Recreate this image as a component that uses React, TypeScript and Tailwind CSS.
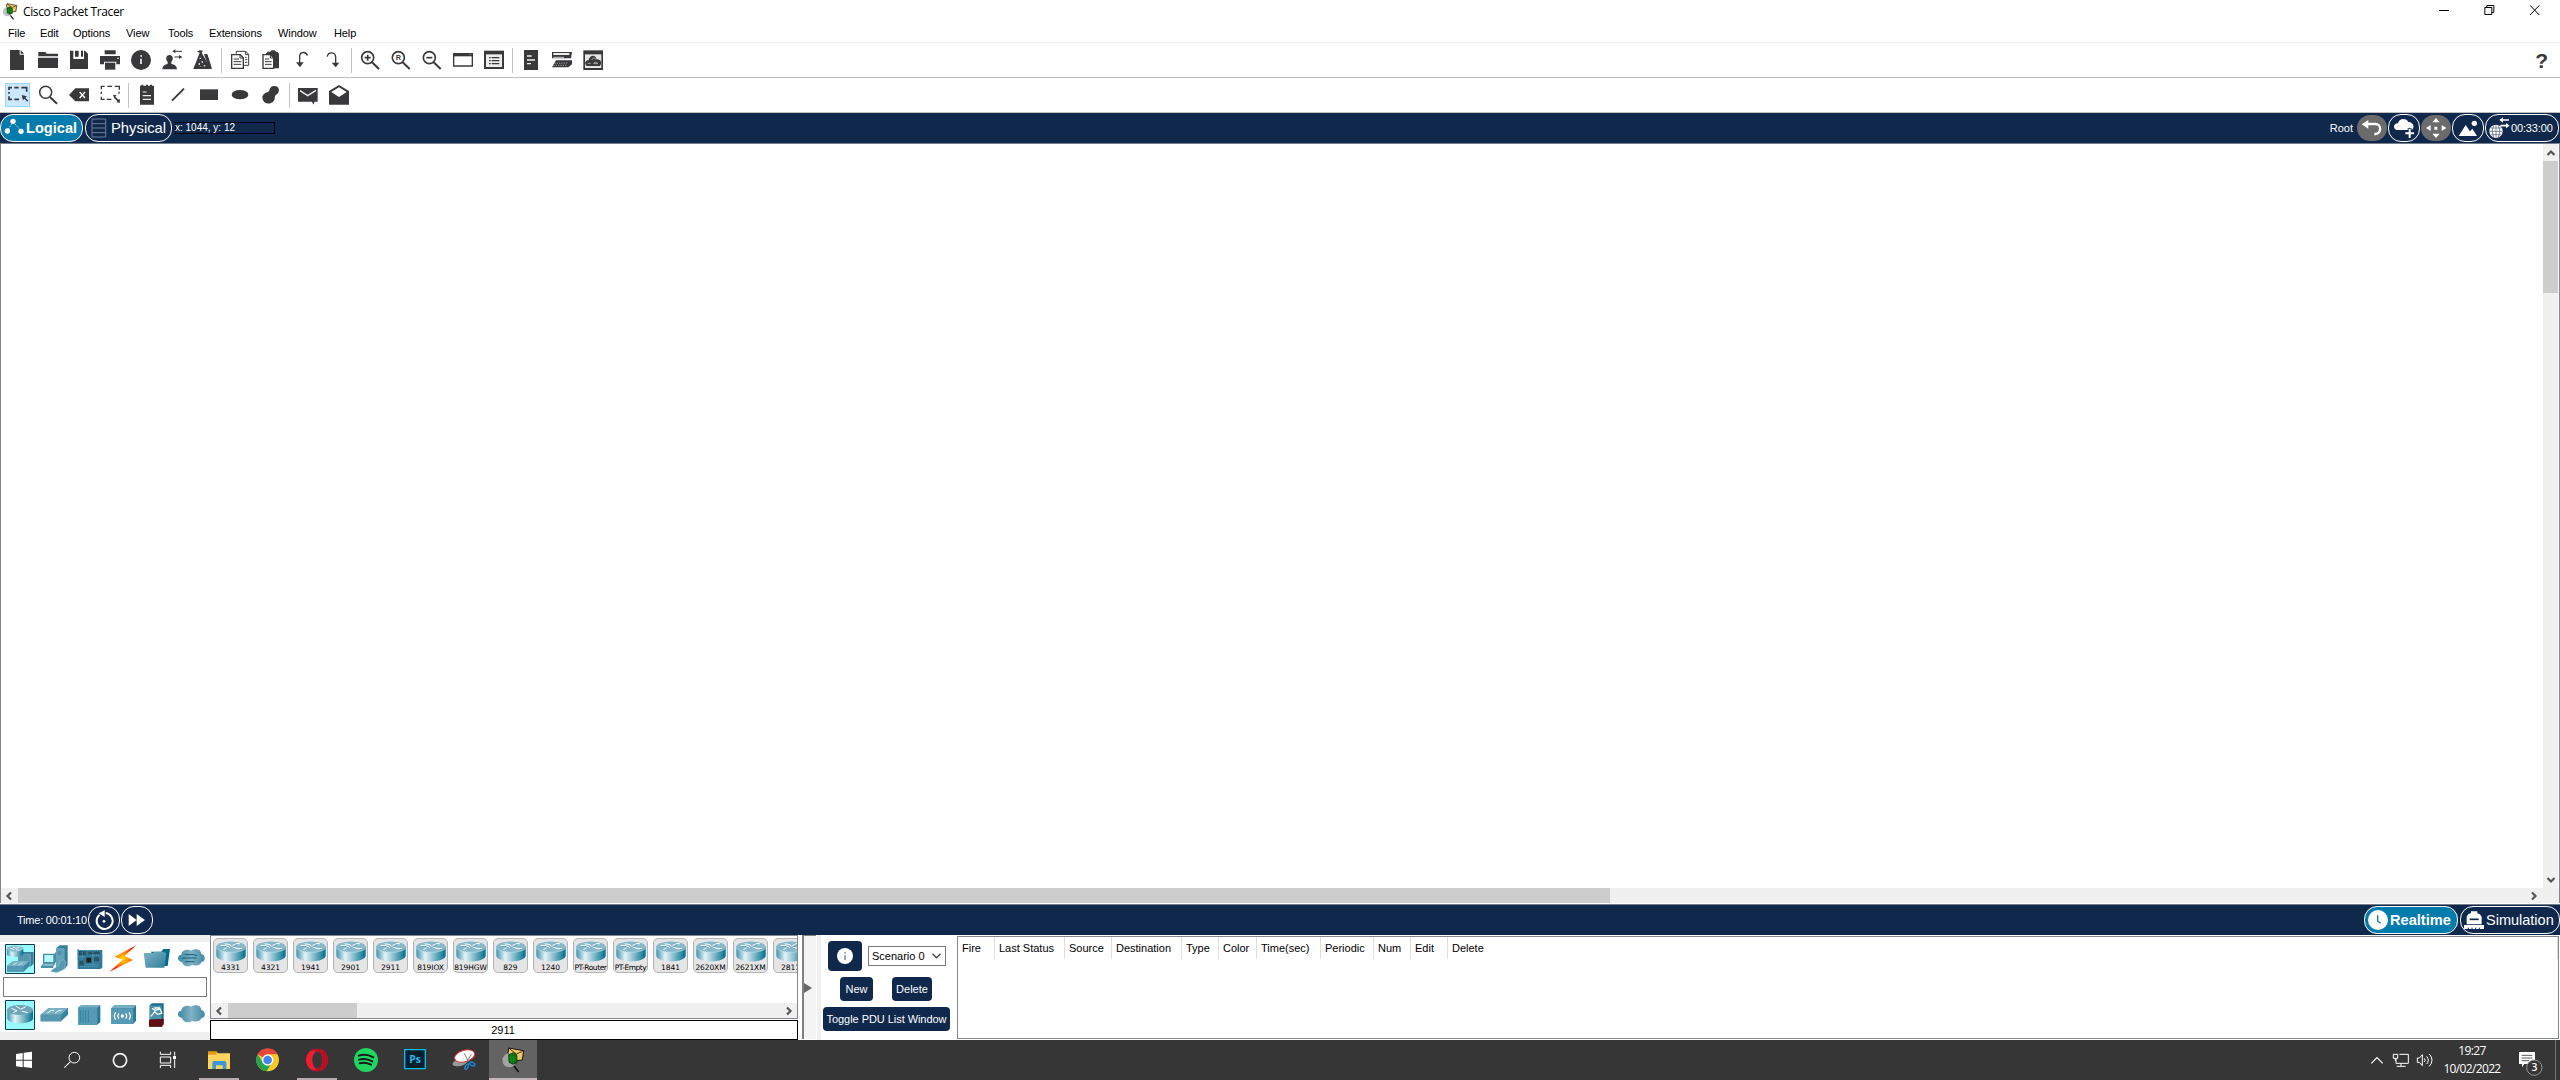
import React from "react";

type P = { box: string; w: string; children: React.ReactNode };
const Glyph = ({ box, w, children }: P) => (
  <svg viewBox={box} className={"block shrink-0 " + w} fill="none">
    {children}
  </svg>
);

const D = "#39393b";
const NAVY = "#0f284c";

/* ---------- shared gradients ---------- */
const Defs = () => (
  <svg className="absolute size-0">
    <defs>
      <linearGradient id="cyl" x1="0" x2="1">
        <stop offset="0" stopColor="#3f93ad" />
        <stop offset=".3" stopColor="#e3f3f7" />
        <stop offset=".5" stopColor="#a5cfdb" />
        <stop offset="1" stopColor="#006f8e" />
      </linearGradient>
      <linearGradient id="steel" x1="0" x2="1" y1="0" y2="1">
        <stop offset="0" stopColor="#7fb3c6" />
        <stop offset="1" stopColor="#2f7f9c" />
      </linearGradient>
      <linearGradient id="cloud" x1="0" x2="1">
        <stop offset="0" stopColor="#3e89a6" />
        <stop offset=".5" stopColor="#82b1c3" />
        <stop offset="1" stopColor="#3e89a6" />
      </linearGradient>
      <radialGradient id="bolt">
        <stop offset="0" stopColor="#ffe000" />
        <stop offset=".45" stopColor="#ff8a00" />
        <stop offset="1" stopColor="#ff1500" />
      </radialGradient>
    </defs>
  </svg>
);

/* ---------- main toolbar ---------- */
const files: React.ReactNode[] = [
  <path d="M30 150h29v14h13v46H30zM62 150l10 11H62z" fill={D} />,
  <path d="M115 156h21l4 5h34v8h-59zM114 173h60v31h-60z" fill={D} />,
  <><path d="M210 152h10v25h32v-25h3l9 9v46h-54z" fill={D} /><path d="M225 152h11v18h-11zM243 152h6v18h-6z" fill={D} /></>,
  <><path d="M314 151h33v12h-33zM300 168h60v25h-11v-8h-37v8h-12z" fill={D} /><path d="M315 188h31v21h-31z" fill={D} /><path d="M352 173h4v4h-4z" fill="#fff" /></>,
  <><circle cx="423" cy="180" r="30" fill={D} /><path d="M421 165h5v6h-5zM420 176h6v16h-6z" fill="#d4d4d4" /></>,
  <><path d="M487 208c0-11 8-14 16-17v-5c-8-10-4-21 6-21s13 12 5 21v5c9 3 17 6 17 17z" fill={D} /><path d="M524 154h22M523 171h22" stroke={D} strokeWidth="3" /><path d="M517 154l9-6v12zM546 171l-9-6v12z" fill={D} /></>,
  <><path d="M580 207l19-49-8-3 8-4 10 1-4 6 28 49z" fill={D} /><path d="M612 163l10-1 14 44h-8z" fill={D} /><path d="M599 173h4v4h-4zM605 184h4v4h-4zM596 190h4v4h-4zM611 196h5v4h-5zM599 199h5v3h-5z" fill="#fff" /><path d="M582 202h49" stroke={D} strokeWidth="5" /></>,
];
const edits: React.ReactNode[] = [
  <><path d="M709 161v-7h28l9 9v33h-14" stroke={D} strokeWidth="3" /><path d="M737 154v10h9M717 172" stroke={D} strokeWidth="3" /><path d="M695 164h26l9 9v32h-35z" fill="#fff" stroke={D} strokeWidth="4" /><path d="M701 177h16M701 185h23M701 193h23M720 164v10h9M735 172h5M735 179h7M735 187h7" stroke={D} strokeWidth="3" /></>,
  <><path d="M797 161l6-6h8l4-4h9l4 4h4l5 6v44h-16l-7-32-12-9z" fill={D} /><path d="M789 164h23l9 9v32h-32z" fill="#fff" stroke={D} strokeWidth="4" /><path d="M795 177h13M795 185h20M795 193h20M811 164v10h9" stroke={D} strokeWidth="3" /></>,
  <><path d="M922 167c-3-14-23-12-23 2v21" stroke={D} strokeWidth="4" /><path d="M888 187h23l-11 15z" fill={D} /></>,
  <><path d="M982 170c2-16 25-15 25 2v18" stroke={D} strokeWidth="4" /><path d="M995 188h23l-11 14z" fill={D} /></>,
];
const views: React.ReactNode[] = [
  <><circle cx="173" cy="83" r="18" stroke={D} strokeWidth="5" /><path d="M186 97l21 20" stroke={D} strokeWidth="6" /><path d="M164 83h18M173 74v18" stroke={D} strokeWidth="5" /></>,
  <><circle cx="265" cy="83" r="18" stroke={D} strokeWidth="5" /><path d="M278 97l21 20" stroke={D} strokeWidth="6" /><text x="265" y="91" textAnchor="middle" fill={D} fontSize="22" fontWeight="700" fontFamily="Liberation Sans">R</text></>,
  <><circle cx="358" cy="83" r="18" stroke={D} strokeWidth="5" /><path d="M371 97l21 20" stroke={D} strokeWidth="6" /><path d="M349 83h18" stroke={D} strokeWidth="5" /></>,
  <><path d="M431 71h56v37h-56z" stroke={D} strokeWidth="4" /><path d="M430 70h58v9h-58z" fill={D} /><path d="M478 73h6" stroke="#aaa" strokeWidth="2" /></>,
  <><path d="M522 62h60v55h-60z" fill={D} /><path d="M528 73h48v38h-48z" fill="#ededed" /><path d="M537 83h5M545 83h23M537 92h5M545 92h23M537 101h5M545 101h23" stroke={D} strokeWidth="4" /></>,
];
const tools: React.ReactNode[] = [
  <><path d="M642 60h42v60h-42z" fill={D} /><path d="M651 78h14M651 90h24M651 101h12" stroke="#eee" strokeWidth="4" /></>,
  <><path d="M726 66h60l-3 19h-57z" fill={D} /><path d="M730 69h48v6h-48z" fill="#eee" /><path d="M730 82h32" stroke="#ccc" strokeWidth="3" /><path d="M738 91h48v12l-11 9h-49z" fill={D} /><path d="M733 100l42-1M730 106h40" stroke="#999" strokeWidth="3" strokeDasharray="4 3" /></>,
  <><path d="M820 61h59v59h-59z" fill={D} /><path d="M825 73h49v41h-49z" fill="#e6e6e6" /><path d="M828 106c-7-12 4-16 8-15 2-17 22-18 24-3 13-1 17 11 10 20h-40z" fill={D} /><path d="M846 90c1-8 11-8 12-1M833 100h9M851 101c2-6 11-6 12 0z" stroke="#aaa" strokeWidth="3" /></>,
];
const select: React.ReactNode[] = [
  <><path d="M16.500 250.500h72v69h-72z" fill="#cce8ff" stroke="#99d1ff" strokeWidth="3" /><path d="M27 270v-7h9M43 263h13M64 263h16v12M27 276v5M27 289v9h9M43 298h14" stroke={D} strokeWidth="5" /><path d="M65 285l16 4-5 4 9 9-3 3-9-9-4 5z" fill={D} /></>,
  <><circle cx="137" cy="277" r="18" stroke={D} strokeWidth="4.500" /><path d="M150 291l21 20" stroke={D} strokeWidth="6" /></>,
  <><path d="M207 285l19-20h41v39h-41z" fill={D} /><path d="M239 276l16 18M255 276l-16 18" stroke="#fff" strokeWidth="4" /></>,
  <><path d="M304 268v-9h10M322 259h14M344 259h14v10M304 275v7M304 290v8h10M320 298h14M357 275v6" stroke={D} strokeWidth="4" /><path d="M339 284l4 11 9 9-3 3 11 1-1-12-4 3-9-9 4-4z" fill={D} /></>,
];
const draws: React.ReactNode[] = [
  <><path d="M420 257h4v-3h6v3h8v-3h6v3h6v-3h6v3h6v57h-42z" fill={D} /><path d="M428 276h12M428 287h25M428 298h25" stroke="#eee" strokeWidth="3.500" /></>,
  <path d="M516 302l36-36" stroke={D} strokeWidth="6" />,
  <path d="M600 268h54v32h-54z" fill={D} />,
  <ellipse cx="720" cy="284" rx="25" ry="14" fill={D} />,
  <path d="M788 298c-3-12 5-19 14-21 10-3 4-19 21-19s17 20 7 25c-8 5-4 13-8 19-9 12-30 12-34-4z" fill={D} />,
];
const mails: React.ReactNode[] = [
  <><path d="M894 264h59v41h-9l-4 9-4-9h-42z" fill={D} /><path d="M900 272l23 15 25-16" stroke="#eee" strokeWidth="4" /></>,
  <><path d="M987 273l30-18 30 18v41h-60z" fill={D} /><path d="M994 276l23-14 23 14-23 15z" fill="#fff" /></>,
];

type RowP = { items: React.ReactNode[]; x: number; y: number };
const Tools = ({ items, x, y }: RowP) => (
  <>
    {items.map((n, i) => (
      <Glyph key={i} box={`${x + 93 * i} ${y} 93 90`} w="w-[31px] h-[30px]">{n}</Glyph>
    ))}
  </>
);
const Sep = () => (
  <div className="flex w-[6px] shrink-0 pl-[3px]"><div className="h-[25px] w-px bg-[#c6c6c6]" /></div>
);

/* ---------- network devices ---------- */
const Router = () => (
  <svg viewBox="0 0 90 62" className="block h-[21px] w-[30px]" fill="none">
    <path d="M1 17v27c0 9 20 17 44 17s44-8 44-17V17z" fill="url(#cyl)" />
    <ellipse cx="45" cy="17" rx="44" ry="16" fill="#86b9cc" />
    <path d="M1 19c3 19 85 19 88 0" stroke="#c3e1ea" strokeWidth="2" />
    <path d="M14 13h14l14 6M26 8l16 2 4 6M49 14l13-7 10 1M50 17l16 6 12-2M22 25l13-7" stroke="#fff" strokeWidth="3" />
    <path d="M15 16h12l12 5M50 17l12-6" stroke="#3f7f96" strokeWidth="1.500" />
  </svg>
);
const devices = ["4331", "4321", "1941", "2901", "2911", "819IOX", "819HGW", "829", "1240", "PT-Router", "PT-Empty", "1841", "2620XM", "2621XM", "2811"];

const categories: React.ReactNode[] = [
  <><path d="M16.500 193.500h87v87h-87z" fill="#97fbff" stroke="#123c46" strokeWidth="3" /><path d="M54 221l9-5h38v35l-8 8H54z" fill="#3a7f99" /><path d="M54 221h39v38H54z" fill="#5c9db4" /><path d="M60 226v28M67 226v28M74 226v28M81 226v28" stroke="#3f86a0" strokeWidth="2" /><path d="M21 207v15c0 12 49 12 49 0v-15z" fill="url(#cyl)" /><ellipse cx="45" cy="206" rx="25" ry="9" fill="#8bbccd" /><path d="M30 204l12 5M38 201l9 4 12-4M48 209l11 2" stroke="#fff" strokeWidth="2" /><path d="M21 258l19-15h48v16l-17 16H21z" fill="#3f8ba7" /><path d="M21 258l19-15h48l-17 15z" fill="#77b2c6" /><path d="M21 258h50v17H21z" fill="#5699b2" /><path d="M39 255l12-7M55 255l14-7" stroke="#e8ffff" strokeWidth="2" /></>,
  <><path d="M170 204l10-8h24v59l-9 12h-25z" fill="#327f9b" /><path d="M170 204h25v62h-25z" fill="#62a2ba" /><path d="M173 216h12M173 222h12" stroke="#2d7794" strokeWidth="2" /><path d="M130 221h34l5-5v30l-5 5h-34z" fill="#4b8da6" /><path d="M134 225h27v21h-27z" fill="#b8f8ff" /><path d="M124 258l9-8h35l-7 9v5h-37z" fill="#4b91ab" /><path d="M127 257l8-5h27l-5 5z" fill="#8fc1d0" /><path d="M156 270l22-14 2-13 12-4 7 7-5 22-22 10-18-3z" fill="#5799b0" stroke="#c6e6ee" /></>,
  <><path d="M231 208l8 2h67v54l-7 3h-67z" fill="#2f7c9a" /><path d="M236 214h20v12h-20zM264 215h34v8h-34zM237 242h13v14h-13zM281 232h15v12h-15z" fill="#2a5364" /><path d="M258 233h15v15h-15z" fill="#222" /><path d="M236 211h64M240 260h52M238 230h18M275 226h23M255 254h42M246 217v24M278 217v36" stroke="#86b8c8" strokeWidth="2" strokeDasharray="3 3" /></>,
  <path d="M409 196l-65 34 24 9-40 37 70-36-24-12z" fill="url(#bolt)" />,
  <><path d="M453 215h32l6-8h20l-7 51h-10z" fill="#006c8b" /><path d="M432 219h27l6-4h26l9 5-6 43h-56z" fill="url(#steel)" /></>,
  <><path d="M545 246c-14-1-17-21-2-22 0-13 20-19 30-12 13-9 30-2 30 10 14 3 14 23 0 25-4 10-19 12-27 7-11 9-28 5-31-8z" fill="url(#cloud)" /><path d="M553 224h27l10 3M545 234h43M554 245h28" stroke="#165f7c" strokeWidth="3" /></>,
];
const routersRow: React.ReactNode[] = [
  <><path d="M16.500 361.500h87v87h-87z" fill="#97fbff" stroke="#123c46" strokeWidth="3" /><path d="M22 391v24c0 20 77 20 77 0v-24z" fill="url(#cyl)" /><ellipse cx="60" cy="390" rx="39" ry="15" fill="#6ea5ba" /><path d="M34 385l17 7M47 378l15 9M63 387l15-7M65 393l18 5M40 398l12-6" stroke="#fff" strokeWidth="3" /></>,
  <><path d="M123 404l24-20h58v20l-21 20h-61z" fill="#3585a2" /><path d="M123 404l24-20h58l-21 20z" fill="#79b0c3" /><path d="M123 404h61v20h-61z" fill="#5696ae" /><path d="M143 399l12-8h8M167 399l10-7h9" stroke="#e9ffff" strokeWidth="3" /></>,
  <><path d="M233 383l10-8h57v52l-10 7h-57z" fill="#277a97" /><path d="M233 383l10-8h57l-9 8z" fill="#79b0c3" /><path d="M233 383h58v51h-58z" fill="#559bb5" /><path d="M240 391v37M248 391v37M256 391v37M264 391v37" stroke="#2f7c97" strokeWidth="2.500" /></>,
  <><path d="M334 385l9-9h65v46l-8 9h-66z" fill="#277a97" /><path d="M334 385l9-9h65l-8 9z" fill="#79b0c3" /><path d="M334 385h66v46h-66z" fill="#559bb5" /><circle cx="367" cy="408" r="5" fill="#fff" /><path d="M357 400q-6 8 0 16M377 400q6 8 0 16M347 397q-8 11 0 22M387 397q8 11 0 22" stroke="#fff" strokeWidth="4" /></>,
  <><path d="M450 376l7-6h35v62l-6 8h-36z" fill="#176c8a" /><path d="M450 376h36v42h-36z" fill="#4a90ab" /><path d="M448 419l44-3v16l-5 8h-39z" fill="#600e12" /><path d="M457 385l10 6 15-4 4 13-13 3-8-8-11 14M464 384h17" stroke="#fff" strokeWidth="4" /></>,
  <path d="M545 414c-14-1-17-21-2-22 0-13 20-19 30-12 13-9 30-2 30 10 14 3 14 23 0 25-4 10-19 12-27 7-11 9-28 5-31-8z" fill="url(#cloud)" />,
];
const Palette = ({ items, y }: { items: React.ReactNode[]; y: number }) => (
  <div className="flex h-[35px] bg-white pl-[3px]">
    {items.map((n, i) => (
      <Glyph key={i} box={`${9 + 103 * i} ${y} 103 105`} w="w-[34.333px] h-[35px]">{n}</Glyph>
    ))}
  </div>
);

/* ---------- taskbar ---------- */
const system: React.ReactNode[] = [
  <path d="M48 522l20-3v20H48zM71 518l25-3v24H71zM48 542h20v20l-20-3zM71 542h25v22l-25-3z" fill="#fff" />,
  <><circle cx="223" cy="533" r="16" stroke="#fff" strokeWidth="3" /><path d="M211 545l-18 18" stroke="#fff" strokeWidth="3.500" /></>,
  <circle cx="360" cy="541" r="20" stroke="#f4f4f4" strokeWidth="5" />,
  <><path d="M481 515v8h31v-8M481 564v-8h31v8M481 531h31v18h-31zM524 515v12M524 538v26" stroke="#fff" strokeWidth="3" /><path d="M519 528h9v9h-9z" fill="#fff" /></>,
];
const Packet = () => (
  <><path d="M911 444l45 8-4 28-28 3-15-24z" fill="#f1c764" stroke="#1b1303" strokeWidth="3" /><path d="M913 446l21 16 19-8" stroke="#251b06" strokeWidth="2.500" /><circle cx="913" cy="481" r="21" fill="#b3b4b0" fillOpacity=".8" /><path d="M911 464l14-6 11 8v22l-12 5-12-6z" fill="#0a6a12" stroke="#0a230b" strokeWidth="2" /><path d="M918 463v26M926 461v28M913 472h22M913 480h22" stroke="#16c023" strokeWidth="2" strokeDasharray="4 2" /><path d="M927 498l14 18" stroke="#111" strokeWidth="5" /></>
);
const apps: { n: React.ReactNode; line?: string }[] = [
  { line: "w-[40px]", n: <><path d="M9 455h26l4 5h36v47H9z" fill="#ffd560" /><path d="M9 454h26v10H9z" fill="#e39a12" /><path d="M22 507v-20l4-4h34l4 4v20H53v-11H33v11z" fill="#3b96dc" /></> },
  { n: <><circle cx="188" cy="480" r="34" fill="#fbc926" /><path d="M188 480l-30-17A34 34 0 0 1 218 463h-30z" fill="#e5473a" /><path d="M158 463A34 34 0 0 0 185 514l16-27-27 1z" fill="#27a350" /><circle cx="188" cy="480" r="17" fill="#fff" /><circle cx="188" cy="480" r="13" fill="#4285ee" /></> },
  { line: "w-[40px]", n: <><ellipse cx="336" cy="480" rx="33" ry="34" fill="#f21c31" /><ellipse cx="337" cy="480" rx="15" ry="26" fill="#373737" /><path d="M337 446c-9 0-15 4-19 8 20-8 34 6 34 26s-14 34-32 27c19 17 49 0 49-27 0-20-13-34-32-34z" fill="#b70f22" /></> },
  { n: <><circle cx="483" cy="480" r="36" fill="#1fd662" /><path d="M461 467q23-7 44 5M462 479q20-6 40 5M464 490q18-5 34 4" stroke="#191919" strokeWidth="6" strokeLinecap="round" /></> },
  { n: <><path d="M599 449h62v57h-62z" fill="#071e2d" stroke="#00bff2" strokeWidth="4" /><text x="630" y="489" textAnchor="middle" fill="#22baf0" fontFamily="Open Sans" fontWeight="700" fontSize="31">Ps</text></> },
  { n: <><ellipse cx="764" cy="488" rx="22" ry="10" fill="#999" transform="rotate(-12 764 488)" /><ellipse cx="779" cy="468" rx="31" ry="17" fill="#fff" stroke="#e33535" strokeWidth="3" transform="rotate(-16 779 468)" /><path d="M778 460l13 26M799 463l-15 25" stroke="#777" strokeWidth="3" /><ellipse cx="785" cy="500" rx="4" ry="9" stroke="#168be0" strokeWidth="4" transform="rotate(25 785 500)" /><ellipse cx="802" cy="492" rx="8" ry="5" stroke="#168be0" strokeWidth="4" transform="rotate(25 802 492)" /></> },
];

const Arrow = ({ d, className }: { d: string; className: string }) => (
  <svg viewBox="0 0 16 16" className={"block size-4 shrink-0 " + className} fill="none">
    <path d={d} stroke="#555" strokeWidth="2.200" />
  </svg>
);
const LEFT = "M10 4.500L6.500 8l3.500 3.500";
const RIGHT = "M6 4.500L9.500 8 6 11.500";

const cols: [string, string][] = [
  ["Fire", "w-[37px]"], ["Last Status", "w-[70px]"], ["Source", "w-[47px]"], ["Destination", "w-[70px]"], ["Type", "w-[37px]"],
  ["Color", "w-[38px]"], ["Time(sec)", "w-[64px]"], ["Periodic", "w-[53px]"], ["Num", "w-[37px]"], ["Edit", "w-[37px]"],
];
const menus: [string, string][] = [
  ["File", "w-[32px]"], ["Edit", "w-[33px]"], ["Options", "w-[53px]"], ["View", "w-[42px]"], ["Tools", "w-[41px]"],
  ["Extensions", "w-[69px]"], ["Window", "w-[56px]"], ["Help", "w-[40px]"],
];
const pill = "h-[28px] shrink-0 rounded-[13px] border border-white flex items-center";
const navyBtn = "flex items-center justify-center rounded-[4px] bg-[#0f284c] text-white";

export default function App() {
  return (
    <div className="flex h-[1080px] w-[2560px] flex-col overflow-hidden whitespace-nowrap bg-white font-['Liberation_Sans',sans-serif] text-[11px] leading-none text-black">
      <Defs />

      {/* title bar */}
      <header className="flex h-[22px] shrink-0 pl-[2px] pr-[2px]">
        <svg viewBox="890 441 70 78" className="mt-[3px] block h-[17px] w-[16px]" fill="none"><Packet /></svg>
        <span className="ml-[5px] mt-[6px] font-['Open_Sans',sans-serif] text-[12px] tracking-[-0.38px]">Cisco Packet Tracer</span>
        <div className="ml-auto flex">
          <Glyph box="363 0 137 60" w="w-[45.667px] h-[20px]"><path d="M417 31.500h30" stroke="#000" strokeWidth="3" /></Glyph>
          <Glyph box="500 0 137 60" w="w-[45.667px] h-[20px]"><path d="M553.500 22.500h21v21h-21zM559.500 22.500v-6h21v21h-6" stroke="#000" strokeWidth="3" /></Glyph>
          <Glyph box="637 0 137 60" w="w-[45.667px] h-[20px]"><path d="M691 16l28 29M719 16l-28 29" stroke="#000" strokeWidth="3" /></Glyph>
        </div>
      </header>

      <nav className="flex h-[21px] shrink-0 items-center border-b border-[#efefef] pl-[8px]">
        {menus.map(([m, w]) => <span key={m} className={w + " pt-[3px] tracking-[-0.1px]"}>{m}</span>)}
      </nav>

      {/* toolbars */}
      <div className="flex h-[35px] shrink-0 items-center border-b border-[#bfbfbf] pl-px">
        <Tools items={files} x={3} y={135} /><Sep />
        <Tools items={edits} x={672} y={135} /><Sep />
        <Tools items={views} x={132} y={45} /><Sep />
        <Tools items={tools} x={615} y={45} />
        <span className="ml-auto mr-[12px] pt-px text-[21px] font-bold text-[#39393b]">?</span>
      </div>
      <div className="flex h-[35px] shrink-0 items-center border-b border-[#bfbfbf] pl-px">
        <Tools items={select} x={3} y={240} /><Sep />
        <Tools items={draws} x={393} y={240} /><Sep />
        <Tools items={mails} x={876} y={240} />
      </div>

      {/* workspace bar */}
      <div className="flex h-[31px] shrink-0 items-center border-b border-[#75808c] bg-[#0f284c] text-white">
        <div className={pill + " w-[83px] bg-[#047bad]"}>
          <Glyph box="9 345 66 81" w="w-[22px] h-[27px] ml-[2px]">
            <path d="M22 393L39 365 63 393" stroke="#fff" strokeWidth="2" strokeDasharray="4 3" />
            <circle cx="39" cy="364" r="8" fill="#fff" /><circle cx="22" cy="393" r="8" fill="#fff" /><circle cx="63" cy="394" r="8" fill="#fff" />
          </Glyph>
          <span className="ml-px text-[14.600px] font-bold">Logical</span>
        </div>
        <div className={pill + " ml-[2px] w-[87px]"}>
          <Glyph box="270 345 54 81" w="w-[18px] h-[27px] ml-[4px]">
            <path d="M276 357h41v54h-41zM276 371h41M276 384h41M276 398h41" stroke="#6d7e99" strokeWidth="3" />
          </Glyph>
          <span className="ml-[3px] pt-px text-[14.800px]">Physical</span>
        </div>
        <div className="ml-[3px] flex h-[12px] w-[100px] items-center border border-black text-[10px]"><span className="-ml-px">x: 1044, y: 12</span></div>

        <div className="ml-auto flex items-center pr-px">
          <span className="mr-[4px] pt-px">Root</span>
          <div className="h-[26px] w-[30px] rounded-[13px] bg-[#6b6b6b]">
            <Glyph box="171 345 90 78" w="w-[30px] h-[26px]"><path d="M200 372h26c19 0 19 27 1 30h-4" stroke="#fff" strokeWidth="7" /><path d="M185 373l20-13v26z" fill="#fff" /></Glyph>
          </div>
          <div className={pill + " ml-px w-[32px]"}>
            <Glyph box="267 345 90 78" w="w-[30px] h-[26px]"><path d="M289 390c-14-9-4-22 5-20 3-17 26-17 31-4 18 1 19 19 10 24z" fill="#fff" /><path d="M329 385v29M315 400h28" stroke={NAVY} strokeWidth="12" /><path d="M329 387v27M316 400h26" stroke="#fff" strokeWidth="6" /></Glyph>
          </div>
          <div className="ml-px h-[26px] w-[30px] rounded-[13px] bg-[#6b6b6b]">
            <Glyph box="363 345 90 78" w="w-[30px] h-[26px]"><path d="M408 354l11 13h-22zM408 414l11-13h-22zM378 384l14-9v18zM439 384l-14-9v18zM403 380h9v9h-9z" fill="#fff" /></Glyph>
          </div>
          <div className={pill + " ml-px w-[32px]"}>
            <Glyph box="459 345 90 78" w="w-[30px] h-[26px]"><path d="M476 408l21-33 13 19 7-8 14 22z" fill="#fff" /><circle cx="523" cy="370" r="8" fill="#fff" /></Glyph>
          </div>
          <div className={pill + " ml-px w-[74px]"}>
            <Glyph box="558 345 75 78" w="w-[25px] h-[26px]">
              <circle cx="588" cy="394" r="20" fill="#fff" /><path d="M569 394h38M573 384h30M573 404h30M588 375v38M581 376q-9 18 0 36M595 376q9 18 0 36" stroke={NAVY} strokeWidth="1.500" />
              <path d="M604 360h23M601 377h23" stroke="#fff" strokeWidth="5" /><path d="M598 360l11-8v16zM629 377l-11-8v16z" fill="#fff" />
            </Glyph>
            <span className="tracking-[-0.15px]">00:33:00</span>
          </div>
        </div>
      </div>

      {/* canvas */}
      <main className="flex min-h-0 flex-1 flex-col border-x border-[#828790]">
        <div className="flex min-h-0 flex-1">
          <div className="flex-1 bg-white" />
          <div className="mr-px flex w-[15px] flex-col items-center bg-[#f0f0f0]">
            <Arrow d="M4.500 10L8 6.500 11.500 10" className="my-[0.500px]" />
            <div className="h-[132px] w-full bg-[#cdcdcd]" />
            <Arrow d="M4.500 6L8 9.500 11.500 6" className="mt-auto" />
          </div>
        </div>
        <div className="flex h-[15px] items-center bg-[#f0f0f0]">
          <Arrow d={LEFT} className="mr-px" />
          <div className="h-full w-[1592px] bg-[#cdcdcd]" />
          <Arrow d={RIGHT} className="ml-auto mr-[17px]" />
        </div>
      </main>

      {/* time bar */}
      <div className="mt-px flex h-[31px] shrink-0 items-center border-t border-[#75808c] bg-[#0f284c] text-white">
        <span className="w-[71px] ml-[17px] tracking-[-0.22px]">Time: 00:01:10</span>
        <div className={pill + " w-[32px]"}>
          <Glyph box="267 81 90 78" w="w-[30px] h-[26px]"><path d="M299 104a24 24 0 1 0 18-5" stroke="#fff" strokeWidth="6" /><path d="M296 100l18-9v20z" fill="#fff" /><circle cx="312" cy="124" r="4" fill="#fff" /></Glyph>
        </div>
        <div className={pill + " ml-px w-[32px]"}>
          <Glyph box="366 81 90 78" w="w-[30px] h-[26px]"><path d="M386 102l24 18-24 18zM410 102l25 18-25 18z" fill="#fff" /></Glyph>
        </div>
        <div className={pill + " ml-auto w-[94px] bg-[#047bad]"}>
          <Glyph box="195 111 75 78" w="w-[25px] h-[26px]"><circle cx="234" cy="150" r="30" fill="#fff" /><path d="M233 136v17l9 7" stroke="#047bad" strokeWidth="4" /></Glyph>
          <span className="text-[14.600px] font-bold">Realtime</span>
        </div>
        <div className={pill + " ml-[2px] w-[100px]"}>
          <Glyph box="483 111 72 78" w="w-[24px] h-[26px]"><path d="M500 163v-23q5-10 13-10v-6h19v6q9 1 13 10v23zM492 165h60v12h-60z" fill="#fff" /><path d="M509 148h27" stroke={NAVY} strokeWidth="5" /><path d="M505 173v6M516 173v6M527 173v6M538 173v6" stroke={NAVY} strokeWidth="3" /></Glyph>
          <span className="ml-px pt-px text-[14.500px]">Simulation</span>
        </div>
      </div>

      {/* bottom panels */}
      <section className="flex h-[105px] shrink-0 bg-white">
        <div className="flex w-[210px] shrink-0 flex-col bg-[#f0f0f0] pt-[7px]">
          <Palette items={categories} y={186} />
          <div className="bg-white px-[3px]"><div className="h-[20px] border border-[#7a7a7a] bg-white" /></div>
          <Palette items={routersRow} y={351} />
        </div>

        <div className="flex w-[588px] shrink-0 flex-col">
          <div className="flex h-[84px] flex-col border border-[#828790]">
            <div className="flex h-[67px] gap-[5px] overflow-hidden pl-[2px] pt-[2px]">
              {devices.map((d) => (
                <div key={d} className="flex h-[35px] w-[35px] shrink-0 flex-col items-center rounded-[5px] border border-[#b4b4b4] bg-[#e5e5e5] pt-[2px] font-['DejaVu_Sans',sans-serif] text-[7.500px]">
                  <Router />
                  <span className={"mt-[2px] " + (d.startsWith("PT") ? "tracking-[-0.45px]" : d.length > 5 ? "tracking-[-0.1px]" : "")}>{d}</span>
                </div>
              ))}
            </div>
            <div className="flex h-[15px] items-center bg-[#f0f0f0]">
              <Arrow d={LEFT} className="mr-px" />
              <div className="h-full w-[129px] bg-[#cdcdcd]" />
              <Arrow d={RIGHT} className="ml-auto" />
            </div>
          </div>
          <div className="mt-px flex h-[20px] items-center justify-center border border-black pr-[2px] pt-px text-[11px]">2911</div>
        </div>

        <div className="ml-[4px] flex h-[104px] w-[14px] shrink-0 items-center border-l-2 border-t border-[#808080] bg-[#f4f4f4]">
          <svg viewBox="0 0 8 10" className="block h-[10px] w-[8px]"><path d="M0 0l8 5-8 5z" fill="#666" /></svg>
        </div>
        <div className="ml-px w-[4px] shrink-0 bg-[#f0f0f0]" />

        <div className="flex w-[136px] shrink-0 flex-col pl-[2px] pt-[6px]">
          <div className="flex items-center pl-[5px]">
            <div className={navyBtn + " h-[30px] w-[34px]"}>
              <svg viewBox="0 0 16 16" className="size-4"><circle cx="8" cy="8" r="8" fill="#fff" /><path d="M7.200 4h1.600v1.800H7.200zM7.200 7h1.600v5H7.200z" fill="#8a97ab" /></svg>
            </div>
            <div className="ml-[6px] flex h-[20px] w-[78px] items-center justify-between border border-[#7a7a7a] pl-[3px] pr-[4px]">
              <span>Scenario 0</span>
              <svg viewBox="0 0 9 6" className="h-[6px] w-[9px]" fill="none"><path d="M.5.8l4 4 4-4" stroke="#444" strokeWidth="1.300" /></svg>
            </div>
          </div>
          <div className="mt-[6px] flex gap-[19px] pl-[17px]">
            <div className={navyBtn + " h-[24px] w-[33px]"}>New</div>
            <div className={navyBtn + " h-[24px] w-[40px]"}>Delete</div>
          </div>
          <div className={navyBtn + " mt-[6px] h-[24px] w-[127px] tracking-[-0.05px]"}>Toggle PDU List Window</div>
        </div>

        <div className="mb-px mr-px mt-px flex flex-1 border border-[#828790]">
          {cols.map(([c, w]) => (
            <div key={c} className={"flex h-[22px] shrink-0 items-center border-r border-[#e0e0e0] pl-[4px] " + w}>{c}</div>
          ))}
          <div className="flex h-[22px] flex-1 items-center border-r border-[#e0e0e0] pl-[4px]">Delete</div>
        </div>
      </section>

      {/* taskbar */}
      <footer className="flex h-[40px] shrink-0 bg-[#363636] font-['Open_Sans',sans-serif] text-white">
        {system.map((n, i) => (
          <Glyph key={i} box={`${144 * i} 480 144 120`} w="w-[48px] h-[40px]">{n}</Glyph>
        ))}
        <div className="ml-[2px] flex">
          {apps.map(({ n, line }, i) => (
            <div key={i} className="relative w-[49px]">
              <Glyph box={`${-33 + 147 * i} 420 147 120`} w="w-[49px] h-[40px]">{n}</Glyph>
              {line && <div className={"absolute bottom-0 left-[5px] h-[2px] bg-[#b4acae] " + line} />}
            </div>
          ))}
          <div className="relative ml-px w-[48px] bg-[#636363]">
            <Glyph box="852 420 144 120" w="w-[48px] h-[40px]"><Packet /></Glyph>
            <div className="absolute inset-x-0 bottom-0 h-[2px] bg-[#c2b8bc]" />
          </div>
        </div>
        <div className="ml-auto flex">
          <Glyph box="195 510 72 120" w="w-[24px] h-[40px]"><path d="M214 580l17-17 17 17" stroke="#fff" strokeWidth="3.500" /></Glyph>
          <Glyph box="267 510 72 120" w="w-[24px] h-[40px]"><path d="M298 553h27v27h-37v-13M303 580v9M290 589h27M280 553h13v12h-13zM286 565v8" stroke="#fff" strokeWidth="3" /></Glyph>
          <Glyph box="339 510 72 120" w="w-[24px] h-[40px]"><path d="M352 564h6l9-10v33l-9-10h-6zM373 565q5 6 0 11M380 559q10 12 0 23M388 552q16 18 0 37" stroke="#fff" strokeWidth="3" /></Glyph>
          <div className="flex w-[70px] flex-col items-center pt-[5px] text-[12px] tracking-[-0.65px]">
            <span>19:27</span>
            <span className="mt-[6px]">10/02/2022</span>
          </div>
          <Glyph box="621 510 144 120" w="w-[48px] h-[40px]">
            <path d="M657 546h48v36h-32l-7 10v-10h-9z" fill="#fff" />
            <path d="M665 556h32M665 564h32M665 572h22" stroke="#363636" strokeWidth="2.500" />
            <circle cx="703" cy="593" r="23" fill="#363636" stroke="#999" strokeWidth="3" />
            <text x="703" y="604" textAnchor="middle" fill="#fff" fontSize="31" fontWeight="600" fontFamily="Open Sans">3</text>
          </Glyph>
          <div className="mr-[4px] w-px bg-[#777]" />
        </div>
      </footer>
    </div>
  );
}
